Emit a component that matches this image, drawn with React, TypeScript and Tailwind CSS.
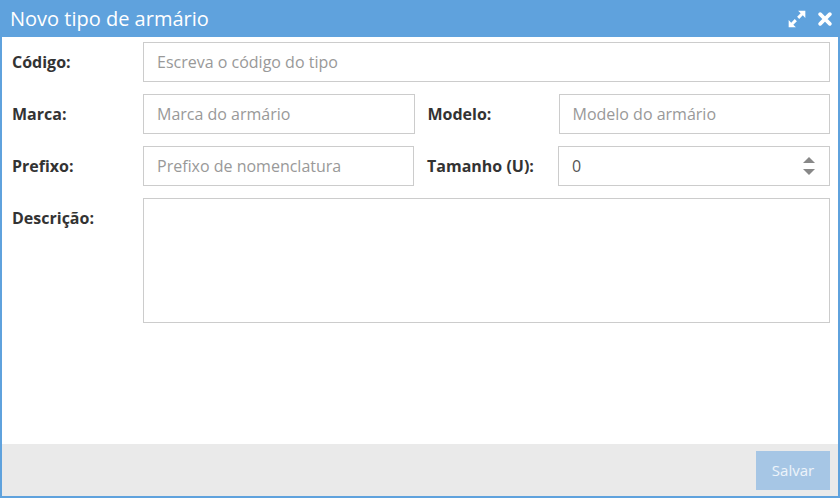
import { useState } from 'react';

const font = { fontFamily: '"Open Sans", "Liberation Sans", sans-serif' };

function Label({ children, className = '' }: { children: React.ReactNode; className?: string }) {
  return (
    <label className={`w-[131px] shrink-0 pt-[9px] text-[16px] leading-[22px] font-bold text-[#333] ${className}`}>
      {children}
    </label>
  );
}

function TextInput({ placeholder }: { placeholder: string }) {
  return (
    <input
      type="text"
      placeholder={placeholder}
      className="h-[40px] min-w-0 flex-1 border border-[#ccc] bg-white px-[13px] text-[16px] text-[#555] outline-none placeholder:text-[#999]"
      style={font}
    />
  );
}

export default function App() {
  const [size, setSize] = useState(0);

  return (
    <div className="flex h-[498px] w-[840px] flex-col bg-white" style={font}>
      {/* Header */}
      <div className="flex h-[37px] shrink-0 items-center justify-between bg-[#5fa2dd] pl-[10px] pr-[8px]">
        <h1 className="text-[20px] leading-none text-white">Novo tipo de armário</h1>
        <div className="flex items-center gap-[11px] text-white">
          <svg width="20" height="20" viewBox="0 0 18 18" fill="currentColor">
            <path d="M10 1.5h6.5V8l-2.3-2.3-3.2 3.2-1.9-1.9 3.2-3.2z" />
            <path d="M8 16.5H1.5V10l2.3 2.3 3.2-3.2 1.9 1.9-3.2 3.2z" />
          </svg>
          <svg width="14" height="14" viewBox="0 0 13 13" fill="none" stroke="currentColor" strokeWidth="3.4" strokeLinecap="round">
            <path d="M2 2l9 9M11 2l-9 9" />
          </svg>
        </div>
      </div>

      {/* Body */}
      <div className="flex flex-1 flex-col border-x-2 border-[#5fa2dd]">
        <div className="flex flex-1 flex-col gap-[12px] pl-[10px] pr-[8px] pt-[5px]">
          <div className="flex items-start">
            <Label>Código:</Label>
            <TextInput placeholder="Escreva o código do tipo" />
          </div>

          <div className="flex items-start">
            <Label>Marca:</Label>
            <TextInput placeholder="Marca do armário" />
            <Label className="ml-[13px]">Modelo:</Label>
            <TextInput placeholder="Modelo do armário" />
          </div>

          <div className="flex items-start">
            <Label>Prefixo:</Label>
            <TextInput placeholder="Prefixo de nomenclatura" />
            <Label className="ml-[13px]">Tamanho (U):</Label>
            <div className="flex h-[40px] min-w-0 flex-1 items-center border border-[#ccc] bg-white pl-[13px] pr-[14px]">
              <span className="flex-1 text-[16px] text-[#555]">{size}</span>
              <div className="flex flex-col gap-[6px] text-[#888]">
                <button onClick={() => setSize(size + 1)} className="block">
                  <svg width="12" height="6" viewBox="0 0 12 6" fill="currentColor">
                    <path d="M6 0L12 6H0z" />
                  </svg>
                </button>
                <button onClick={() => setSize(Math.max(0, size - 1))} className="block">
                  <svg width="12" height="6" viewBox="0 0 12 6" fill="currentColor">
                    <path d="M0 0h12L6 6z" />
                  </svg>
                </button>
              </div>
            </div>
          </div>

          <div className="flex items-start">
            <Label>Descrição:</Label>
            <textarea className="h-[125px] min-w-0 flex-1 resize-none border border-[#ccc] bg-white px-[13px] py-[8px] text-[16px] outline-none" />
          </div>
        </div>

        {/* Footer */}
        <div className="flex h-[52px] shrink-0 items-center justify-end bg-[#eaeaea] pr-[8px]">
          <button className="h-[39px] w-[74px] bg-[#a6c6e5] text-[15px] text-white/80">Salvar</button>
        </div>
      </div>
      <div className="h-[2px] shrink-0 bg-[#5fa2dd]" />
    </div>
  );
}
